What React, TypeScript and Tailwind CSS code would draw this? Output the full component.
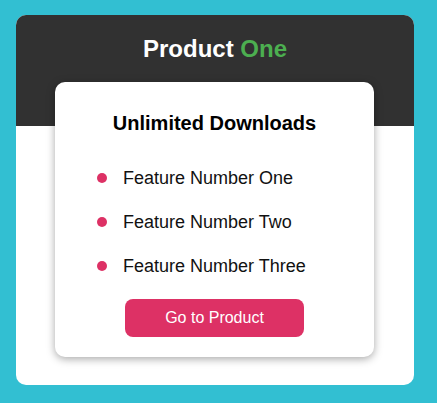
export default function App() {
  const features = ["Feature Number One", "Feature Number Two", "Feature Number Three"];
  return (
    <div className="min-h-[403px] w-full bg-[#32bfd2] pt-[15px] pl-[16px] font-['Liberation_Sans',Arial,sans-serif]">
      <div className="w-[398px] h-[370px] bg-white rounded-[10px] overflow-hidden">
        <div className="h-[111px] bg-[#313131] pt-[20px] text-center">
          <h1 className="text-[24px] leading-[28px] font-bold text-white">
            Product <span className="text-[#4caf50]">One</span>
          </h1>
        </div>
        <div className="relative -mt-[44px] ml-[39px] mr-[40px] h-[275px] bg-white rounded-[10px] shadow-[0_2px_8px_rgba(0,0,0,0.35)] pt-[30px]">
          <h2 className="text-[20px] leading-[23px] font-bold text-black text-center">Unlimited Downloads</h2>
          <ul className="mt-[21px] pl-[42px]">
            {features.map((f) => (
              <li key={f} className="flex items-center h-[44px]">
                <span className="w-[10px] h-[10px] rounded-full bg-[#dd3165] mr-[16px]" />
                <span className="text-[18px] leading-[44px] text-[#111]">{f}</span>
              </li>
            ))}
          </ul>
          <div className="mt-[11px] flex justify-center">
            <button className="w-[179px] h-[38px] rounded-[8px] bg-[#dd3165] text-white text-[16px] leading-[38px]">
              Go to Product
            </button>
          </div>
        </div>
      </div>
    </div>
  );
}
